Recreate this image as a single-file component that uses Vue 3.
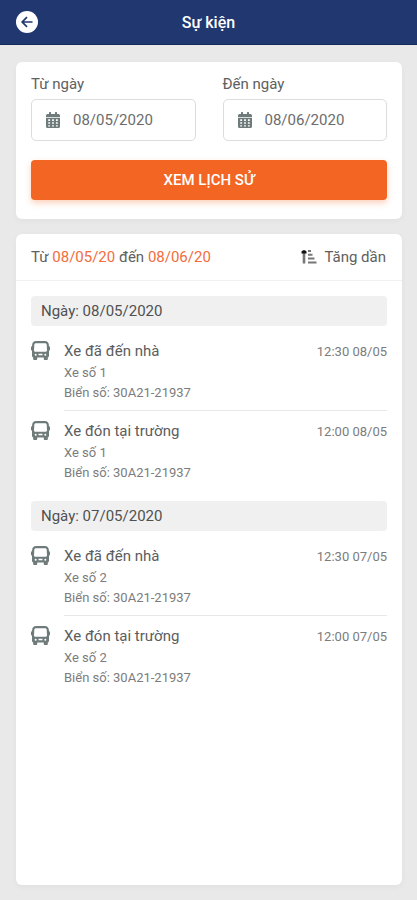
<template>
  <div class="event-page">
    <header class="topbar">
      <button class="back-btn" type="button" aria-label="Quay lại">
        <svg viewBox="0 0 22 22" width="22" height="22">
          <circle cx="11" cy="11" r="11" fill="#fff" />
          <path d="M16.500 11H6.500M11 6.200L6.200 11l4.800 4.800" fill="none" stroke="#20386f" stroke-width="1.700" />
        </svg>
      </button>
      <h1>Sự kiện</h1>
    </header>

    <main class="content">
      <form class="card filter" @submit.prevent="search">
        <div class="dates">
          <div v-for="field in fields" :key="field.id" class="field">
            <label :for="field.id">{{ field.label }}</label>
            <div class="date-box">
              <svg class="calendar" viewBox="0 0 448 512" width="14" height="16">
                <path fill-rule="evenodd" d="M0 464a48 48 0 0 0 48 48h352a48 48 0 0 0 48-48V180H0zM72 232h58v54H72zM195 232h58v54h-58zM318 232h58v54h-58zM72 328h58v50H72zM195 328h58v50h-58zM318 328h58v50h-58zM72 420h58v40H72zM195 420h58v40h-58zM318 420h58v40h-58zM400 64h-48V16a16 16 0 0 0-16-16h-32a16 16 0 0 0-16 16v48H160V16a16 16 0 0 0-16-16h-32a16 16 0 0 0-16 16v48H48A48 48 0 0 0 0 112v50h448v-50a48 48 0 0 0-48-48z" />
              </svg>
              <input :id="field.id" v-model="field.value" type="text" />
            </div>
          </div>
        </div>
        <button class="submit" type="submit">XEM LỊCH SỬ</button>
      </form>

      <section class="card history">
        <div class="history-head">
          <p>Từ <span>{{ range.from }}</span> đến <span>{{ range.to }}</span></p>
          <button class="sort-btn" type="button" @click="ascending = !ascending">
            <svg viewBox="0 0 16 16" width="16" height="16">
              <path d="M1.700 4h2.600v10.500H1.700z" fill="#777" />
              <path d="M.5 4.500V2.500L2 1.200h2l1.500 1.300v2z" fill="#111" />
              <path d="M7 1h3v2H7zM7 4.800h4.500v2H7zM7 8.600h6.500v2H7zM7 12.400h8.500v2H7z" fill="#777" />
            </svg>
            {{ ascending ? 'Tăng dần' : 'Giảm dần' }}
          </button>
        </div>

        <div class="groups">
          <div v-for="group in groups" :key="group.date" class="group">
            <h2>Ngày: {{ group.date }}</h2>
            <ul>
              <li v-for="item in group.items" :key="item.time">
                <svg class="bus" viewBox="0 0 19 19" width="19" height="19">
                  <path fill-rule="evenodd" d="M5 0h9c2.200 0 3.600 1.200 3.800 3.500l.2 1.700c.6.100 1 .5 1 1.100v2.200c0 .6-.4 1-1 1v5.300c0 .8-.5 1.400-1.200 1.600V18c0 .6-.4 1-1 1h-2c-.6 0-1-.4-1-1v-1.500H6.200V18c0 .6-.4 1-1 1h-2c-.6 0-1-.4-1-1v-1.600C1.500 16.200 1 15.600 1 14.800V9.500c-.6 0-1-.4-1-1V6.300c0-.6.400-1 1-1.100l.2-1.700C1.400 1.200 2.800 0 5 0zM5 2.200c-1 0-1.600.6-1.700 1.500L3 9.500c0 .8.500 1.200 1.200 1.200h10.600c.7 0 1.200-.4 1.200-1.200l-.3-5.800c-.1-.9-.7-1.500-1.700-1.500zM4.700 12.700a1 1 0 1 1 0 2 1 1 0 0 1 0-2zM7.500 12.800h4v1.500h-4zM14.300 12.700a1 1 0 1 1 0 2 1 1 0 0 1 0-2z" />
                </svg>
                <div class="detail">
                  <div class="title-row">
                    <h3>{{ item.title }}</h3>
                    <time>{{ item.time }}</time>
                  </div>
                  <p>{{ item.bus }}</p>
                  <p>Biển số: {{ item.plate }}</p>
                </div>
              </li>
            </ul>
          </div>
        </div>
      </section>
    </main>
  </div>
</template>

<script setup>
import { ref, reactive } from 'vue'

const fields = reactive([
  { id: 'from-date', label: 'Từ ngày', value: '08/05/2020' },
  { id: 'to-date', label: 'Đến ngày', value: '08/06/2020' }
])

const range = reactive({ from: '08/05/20', to: '08/06/20' })
const ascending = ref(true)

const groups = ref([
  {
    date: '08/05/2020',
    items: [
      { title: 'Xe đã đến nhà', time: '12:30 08/05', bus: 'Xe số 1', plate: '30A21-21937' },
      { title: 'Xe đón tại trường', time: '12:00 08/05', bus: 'Xe số 1', plate: '30A21-21937' }
    ]
  },
  {
    date: '07/05/2020',
    items: [
      { title: 'Xe đã đến nhà', time: '12:30 07/05', bus: 'Xe số 2', plate: '30A21-21937' },
      { title: 'Xe đón tại trường', time: '12:00 07/05', bus: 'Xe số 2', plate: '30A21-21937' }
    ]
  }
])

// dd/mm/yyyy -> dd/mm/yy
const shortDate = (value) => value.replace(/\d{2}(\d{2})$/, '$1')

const search = () => {
  range.from = shortDate(fields[0].value)
  range.to = shortDate(fields[1].value)
}
</script>

<style>
body {
  margin: 0;
  background: #e9e9e9;
}
</style>

<style scoped>
.event-page {
  display: flex;
  flex-direction: column;
  min-height: 100vh;
  font-family: Roboto, 'Noto Sans', sans-serif;
  font-size: 15px;
  color: #606060;
}

* {
  box-sizing: border-box;
}

h1,
h2,
h3,
p,
ul {
  margin: 0;
  padding: 0;
}

button,
input {
  font: inherit;
  color: inherit;
  border: 0;
  padding: 0;
  background: none;
}

button {
  cursor: pointer;
}

svg {
  display: block;
  flex-shrink: 0;
}

.topbar {
  display: grid;
  grid-template-columns: 22px 1fr 22px;
  align-items: center;
  height: 45px;
  padding: 0 16px;
  background: #20386f;
  border-bottom: 1px solid #14295c;
}

.topbar h1 {
  color: #fff;
  font-size: 16px;
  font-weight: 500;
  text-align: center;
}

.content {
  flex: 1;
  display: flex;
  flex-direction: column;
  gap: 15px;
  padding: 17px 15px 15px 16px;
}

.card {
  background: #fff;
  border-radius: 6px;
  box-shadow: 0 2px 6px rgba(0, 0, 0, 0.04);
}

.filter {
  padding: 12px 15px 19px;
}

.dates {
  display: flex;
  gap: 27px;
}

.field {
  flex: 1;
  min-width: 0;
}

.field label {
  display: block;
  line-height: 20px;
  margin-bottom: 5px;
}

.date-box {
  display: flex;
  align-items: center;
  gap: 13px;
  height: 42px;
  padding: 0 14px;
  border: 1px solid #dcdcdc;
  border-radius: 5px;
}

.date-box input {
  flex: 1;
  min-width: 0;
  color: #6c6c6c;
}

.calendar,
.bus {
  fill: #6f7b7b;
}

.submit {
  display: block;
  width: 100%;
  height: 40px;
  margin-top: 19px;
  border-radius: 4px;
  background: #f26522;
  box-shadow: 0 3px 6px rgba(242, 101, 34, 0.3);
  color: #fff;
  font-weight: 500;
}

.history {
  flex: 1;
}

.history-head {
  display: flex;
  justify-content: space-between;
  align-items: center;
  height: 47px;
  padding: 0 16px 0 15px;
  border-bottom: 1px solid #f0f0f0;
}

.history-head span {
  color: #f26c3c;
}

.sort-btn {
  display: flex;
  align-items: center;
  gap: 7px;
}

.groups {
  display: flex;
  flex-direction: column;
  gap: 18px;
  padding: 15px;
}

.group h2 {
  padding: 0 10px;
  border-radius: 4px;
  background: #f0f0f0;
  color: #505050;
  font-size: 15px;
  font-weight: 400;
  line-height: 30px;
}

.group ul {
  padding-top: 5px;
  list-style: none;
}

.group li {
  display: flex;
  gap: 14px;
}

.bus {
  margin-top: 10px;
}

.detail {
  flex: 1;
  padding-top: 9px;
  font-size: 13px;
  line-height: 20px;
  color: #7c7c7c;
}

.group li:not(:last-child) .detail {
  padding-bottom: 7px;
  border-bottom: 1px solid #e8e8e8;
}

.title-row {
  display: flex;
  justify-content: space-between;
  align-items: center;
}

.title-row h3 {
  color: #5c5c5c;
  font-size: 15px;
  font-weight: 400;
  line-height: 23px;
}
</style>
